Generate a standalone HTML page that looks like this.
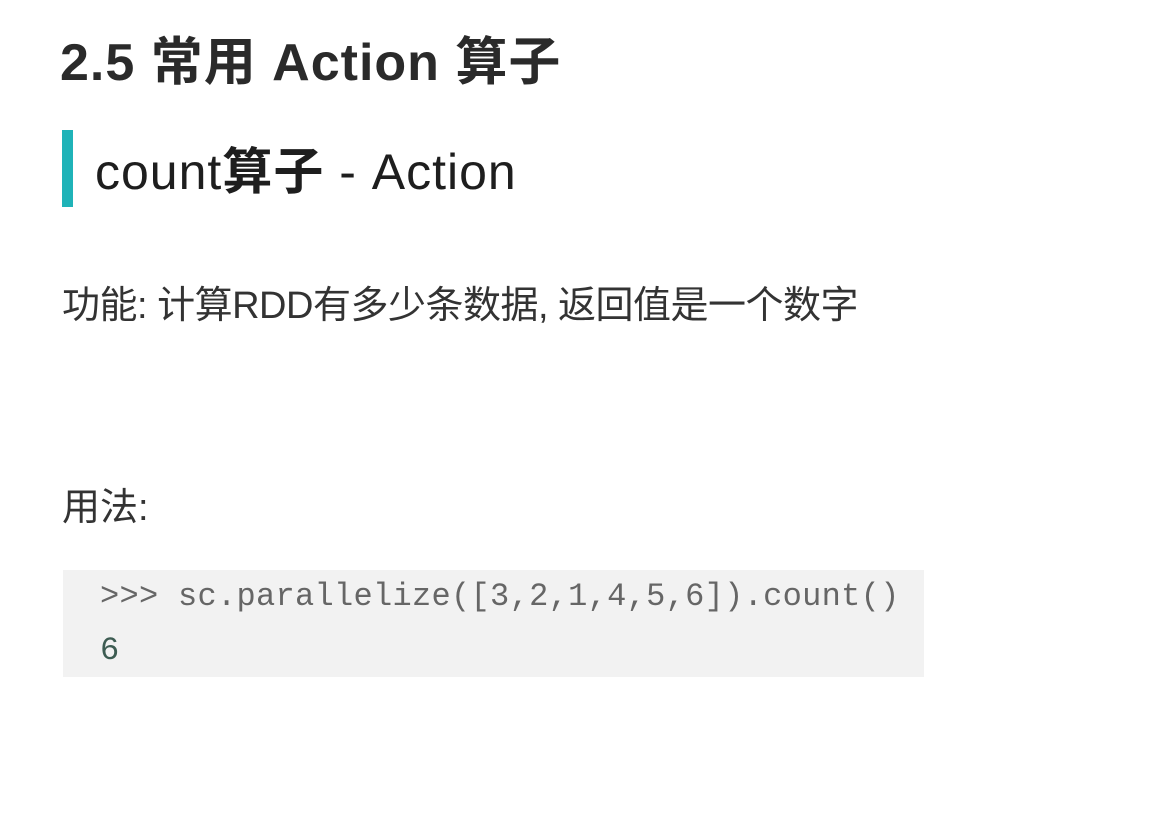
<!DOCTYPE html>
<html><head><meta charset="utf-8"><style>
body{margin:0;width:1176px;height:816px;background:#fff;position:relative;overflow:hidden;font-family:"Liberation Sans","Noto Sans CJK SC",sans-serif;color:#222}
.a{position:absolute;white-space:nowrap}
</style></head><body>
<div class="a" style="left:60px;top:20px;font-size:52px;font-weight:bold;color:#2a2a2a;letter-spacing:1px">2.5 常用 Action 算子</div>
<div class="a" style="left:62px;top:130px;width:11px;height:77px;background:#1fb3b8"></div>
<div class="a" style="left:95px;top:132px;font-size:50px;color:#1e1e1e;letter-spacing:1px">count<b>算子</b> - Action</div>
<div class="a" style="left:62px;top:274px;font-size:38px;color:#333;letter-spacing:-0.5px">功能: 计算RDD有多少条数据, 返回值是一个数字</div>
<div class="a" style="left:62px;top:476px;font-size:38px;color:#333">用法:</div>
<div class="a" style="left:63px;top:570px;width:861px;height:107px;background:#f2f2f2"></div>
<div class="a" style="left:100px;top:578px;font-family:'Liberation Mono',monospace;font-size:32px;letter-spacing:0.3px;color:#666">&gt;&gt;&gt; sc.parallelize([3,2,1,4,5,6]).count()</div>
<div class="a" style="left:100px;top:632px;font-family:'Liberation Mono',monospace;font-size:32px;color:#3d5c52">6</div>
</body></html>
